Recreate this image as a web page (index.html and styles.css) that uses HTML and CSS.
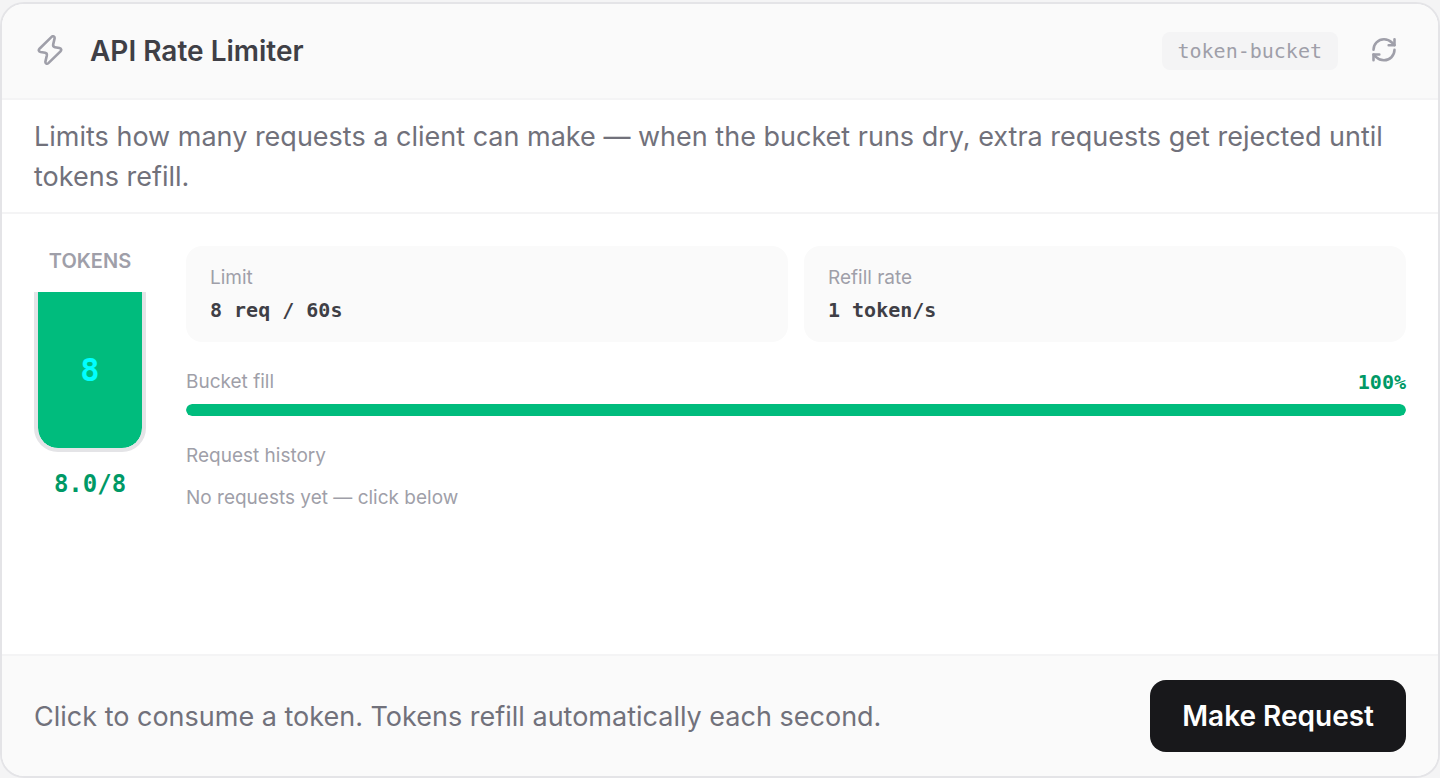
FILE: index.html
```html
<!DOCTYPE html>
<html lang="en">
<head>
<meta charset="utf-8">
<meta name="viewport" content="width=device-width, initial-scale=1">
<title>API Rate Limiter</title>
<link rel="stylesheet" href="styles.css">
</head>
<body>
<main class="card">
  <header class="card-header">
    <svg class="icon zap" viewBox="0 0 32 32" stroke-width="2.600" aria-hidden="true"><path d="M5.500 13.700 17.600 1.900C19 .600 20.900 1.500 20.600 3.400L19.200 9.400C18.900 11 19.400 11.900 20.900 12.200L25.400 13C27.300 13.400 27.800 15 26.500 16.300L14.400 28.100C13 29.400 11.100 28.500 11.400 26.600L12.800 20.600C13.100 19 12.600 18.100 11.100 17.800L6.600 17C4.700 16.600 4.200 15 5.500 13.700Z"/></svg>
    <h1 class="title">API Rate Limiter</h1>
    <code class="tag">token-bucket</code>
    <button class="reset" type="button" aria-label="Reset">
      <svg class="icon" viewBox="0 1 24 24" stroke-width="2.200" aria-hidden="true"><path d="M3 12a9 9 0 0 1 9-9 9.750 9.750 0 0 1 6.740 2.740L21 8"/><path d="M21 3v5h-5"/><path d="M21 12a9 9 0 0 1-9 9 9.750 9.750 0 0 1-6.740-2.740L3 16"/><path d="M8 16H3v5"/></svg>
    </button>
  </header>
  <p class="intro">Limits how many requests a client can make — when the bucket runs dry, extra requests get rejected until tokens refill.</p>
  <section class="content">
    <div class="tokens">
      <h2 class="tokens-label">TOKENS</h2>
      <div class="bucket"><span class="bucket-count">8</span></div>
      <div class="tokens-value">8.0/8</div>
    </div>
    <div class="details">
      <dl class="stats">
        <div class="stat"><dt>Limit</dt><dd>8 req / 60s</dd></div>
        <div class="stat"><dt>Refill rate</dt><dd>1 token/s</dd></div>
      </dl>
      <div class="fill">
        <div class="fill-head"><span id="fill-label">Bucket fill</span><span class="fill-value">100%</span></div>
        <div class="track" role="progressbar" aria-labelledby="fill-label" aria-valuenow="100"><div class="bar" style="width: 100%"></div></div>
      </div>
      <div class="history">
        <h2 class="history-title">Request history</h2>
        <p class="history-empty">No requests yet — click below</p>
      </div>
    </div>
  </section>
  <footer class="card-footer">
    <p class="hint">Click to consume a token. Tokens refill automatically each second.</p>
    <button class="request" type="button">Make Request</button>
  </footer>
</main>
</body>
</html>
```
FILE: styles.css
```css
* { box-sizing: border-box; margin: 0; padding: 0; }
body {
  min-height: 100vh;
  display: flex;
  padding-top: 2px;
  background: #f4f4f5;
  color: #71717b;
  font-family: Inter, "Liberation Sans", sans-serif;
  font-size: 27px;
  line-height: 40px;
}
button { border: 0; font: inherit; cursor: pointer; }
.card {
  flex: 1;
  display: flex;
  flex-direction: column;
  overflow: hidden;
  border: 2px solid #e4e4e7;
  border-radius: 24px;
  background: #fff;
}
.card-header {
  display: flex;
  align-items: center;
  padding: 25px 32px;
  border-bottom: 2px solid #f4f4f5;
  background: #fafafa;
}
.icon {
  display: block;
  width: 28px;
  height: 28px;
  fill: none;
  stroke: #9f9fa9;
  stroke-linecap: round;
  stroke-linejoin: round;
}
.zap { width: 32px; height: 32px; }
.title { margin-left: 24px; color: #3f3f46; font-size: 28px; font-weight: 600; }
.tag {
  margin-left: auto;
  padding: 4px 16px;
  border-radius: 8px;
  background: #f4f4f5;
  color: #9f9fa9;
  font: 20px/30px "DejaVu Sans Mono", monospace;
}
.reset { margin-left: 24px; padding: 8px; background: none; }
.intro { padding: 17px 32px 15px; border-bottom: 2px solid #f4f4f5; }
.content { flex: 1; display: flex; gap: 40px; padding: 32px; }
.tokens { display: flex; flex-direction: column; align-items: center; width: 112px; }
.tokens-label { color: #9f9fa9; font-size: 20px; line-height: 30px; font-weight: 600; }
.bucket {
  display: flex;
  align-items: center;
  justify-content: center;
  align-self: stretch;
  height: 160px;
  margin: 16px 0;
  border: 4px solid #e4e4e7;
  border-top: 0;
  border-radius: 0 0 24px 24px;
  background: #00bc7d;
  background-clip: padding-box;
}
.bucket-count { color: #0ff; font: bold 32px/40px "DejaVu Sans Mono", monospace; }
.tokens-value { color: #009966; font: bold 24px/32px "DejaVu Sans Mono", monospace; }
.details { flex: 1; color: #9f9fa9; font-size: 19px; line-height: 32px; }
.stats { display: grid; grid-template-columns: 1fr 1fr; gap: 16px; }
.stat { padding: 16px 24px; border-radius: 16px; background: #fafafa; }
.stat dd { color: #3f3f46; font: bold 20px/32px "DejaVu Sans Mono", monospace; }
.fill { margin-top: 24px; }
.fill-head { display: flex; justify-content: space-between; }
.fill-value { color: #009966; font: bold 20px/32px "DejaVu Sans Mono", monospace; }
.track { height: 12px; margin-top: 6px; border-radius: 6px; background: #f4f4f5; overflow: hidden; }
.bar { height: 100%; border-radius: 6px; background: #00bc7d; }
.history { margin-top: 24px; }
.history-title { font-size: 19px; font-weight: 400; }
.history-empty { margin-top: 10px; }
.card-footer {
  display: flex;
  align-items: center;
  justify-content: space-between;
  padding: 24px 32px;
  border-top: 2px solid #f4f4f5;
  background: #fafafa;
}
.hint { padding-top: 2px; }
.request {
  padding: 16px 32px;
  border-radius: 16px;
  background: #18181b;
  color: #fff;
  font-size: 28px;
  font-weight: 600;
}
```
